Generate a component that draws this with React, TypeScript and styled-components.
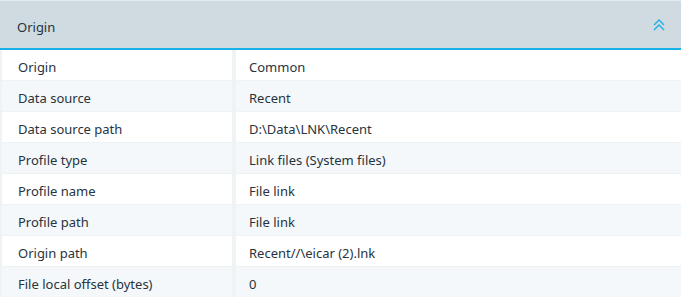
import styled, { createGlobalStyle } from 'styled-components'

const GlobalStyle = createGlobalStyle`
  html, body {
    margin: 0;
    padding: 0;
    background: #ffffff;
  }
  body {
    font-family: "Noto Sans", "Open Sans", sans-serif;
    color: #27343e;
  }
`

const rows: [string, string][] = [
  ['Origin', 'Common'],
  ['Data source', 'Recent'],
  ['Data source path', 'D:\\Data\\LNK\\Recent'],
  ['Profile type', 'Link files (System files)'],
  ['Profile name', 'File link'],
  ['Profile path', 'File link'],
  ['Origin path', 'Recent//\\eicar (2).lnk'],
  ['File local offset (bytes)', '0'],
]

const DoubleChevron = () => (
  <svg width="12" height="14" viewBox="0 0 12 14" fill="none">
    <path d="M1 7 L6 2 L11 7" stroke="#1faee5" strokeWidth="1.4" />
    <path d="M1 12 L6 7 L11 12" stroke="#1faee5" strokeWidth="1.4" />
  </svg>
)

export default function App() {
  return (
    <>
      <GlobalStyle />
      <Panel>
        <Header>
          <Title>Origin</Title>
          <Toggle><DoubleChevron /></Toggle>
        </Header>
        <Table>
          {rows.map(([label, value], i) => (
            <Row key={label} $alt={i % 2 === 1}>
              <Label>{label}</Label>
              <Value>{value}</Value>
            </Row>
          ))}
        </Table>
      </Panel>
    </>
  )
}

const Panel = styled.div`
  display: flex;
  flex-direction: column;
  width: 681px;
  height: 297px;
  overflow: hidden;
  background: #eef3f6;
`

const Header = styled.div`
  display: flex;
  align-items: center;
  justify-content: space-between;
  height: 44px;
  padding: 4px 16px 0 17px;
  border-top: 1px solid #e4ebee;
  border-bottom: 2px solid #16b1e6;
  background: #cfdbe0;
`

const Title = styled.span`
  font-size: 13px;
`

const Toggle = styled.span`
  display: flex;
  margin-top: -3px;
`

const Table = styled.div`
  display: flex;
  flex-direction: column;
  gap: 1px;
  padding-left: 2px;
`

const Row = styled.div<{ $alt: boolean }>`
  display: grid;
  grid-template-columns: 230px 1fr;
  column-gap: 4px;
  height: 30px;

  & > div {
    background: ${p => (p.$alt ? '#f4f8fa' : '#ffffff')};
  }
`

const Cell = styled.div`
  display: flex;
  align-items: center;
  padding-top: 3px;
  font-size: 13px;
  white-space: nowrap;
`

const Label = styled(Cell)`
  padding-left: 16px;
`

const Value = styled(Cell)`
  padding-left: 13px;
`
